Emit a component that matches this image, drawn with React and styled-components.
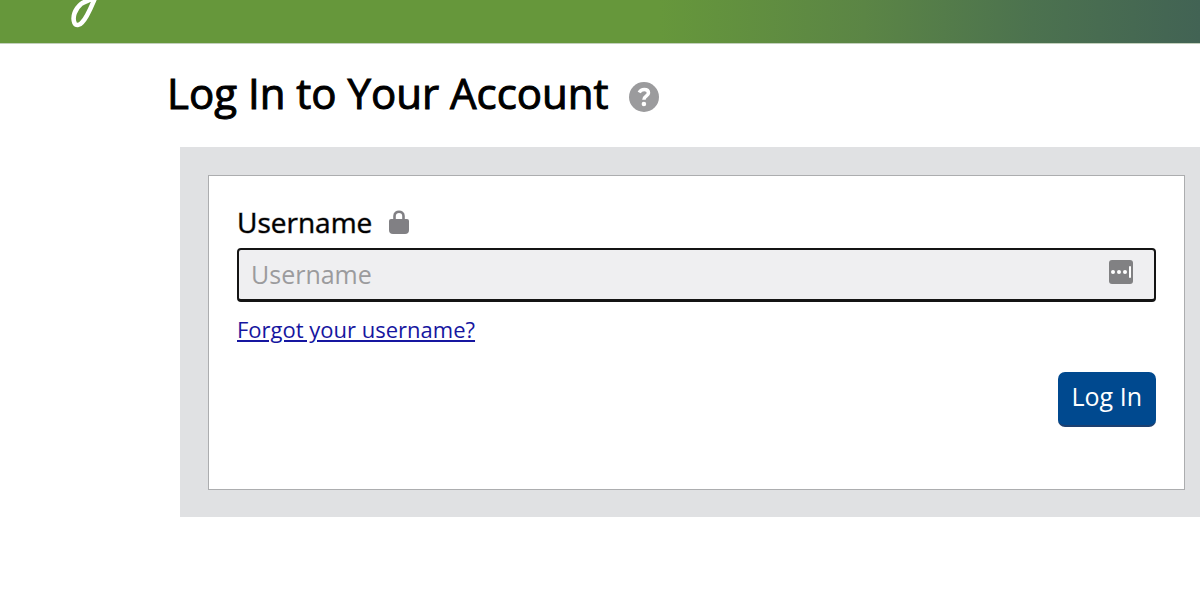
import React from "react";
import styled, { createGlobalStyle } from "styled-components";

const GlobalStyle = createGlobalStyle`
  *, *::before, *::after { box-sizing: border-box; }
  body {
    margin: 0;
    background: #fff;
    color: #000;
    font-family: "Open Sans", "Noto Sans", sans-serif;
    overflow-x: hidden;
  }
`;

const Banner = styled.header`
  height: 44px;
  padding-left: 68px;
  border-bottom: 1px solid #c3d0bd;
  background: linear-gradient(90deg, #66973b 0%, #66973b 55%, #5b8545 72%, #4c724f 86%, #426354 100%);
`;

const Logo = styled.svg`
  display: block;
  width: 36px;
  height: 30px;
`;

const Main = styled.main`
  padding: 27px 0 82px 167px;
`;

const TitleRow = styled.div`
  display: flex;
  align-items: center;
  gap: 20px;
  height: 44px;
`;

const Title = styled.h1`
  margin: 0;
  font-size: 42px;
  line-height: 44px;
  font-weight: 400;
  -webkit-text-stroke: 1px #000;
  white-space: nowrap;
`;

const HelpButton = styled.button`
  width: 30px;
  height: 30px;
  margin-top: 8px;
  padding: 0;
  border: 0;
  background: none;
  cursor: pointer;

  svg { display: block; }
`;

const Panel = styled.section`
  margin: 32px 0 0 13px;
  padding: 28px 15px 27px 28px;
  background: #e0e1e3;
`;

const Card = styled.form`
  padding: 28px;
  padding-bottom: 62px;
  border: 1px solid #acadaf;
  background: #fff;
`;

const LabelRow = styled.div`
  display: flex;
  align-items: center;
  gap: 17px;
  height: 36px;
`;

const Label = styled.label`
  font-size: 28px;
  line-height: 36px;
  -webkit-text-stroke: 1px rgba(0, 0, 0, 0.45);
`;

const Field = styled.div`
  display: flex;
  align-items: center;
  height: 54px;
  margin-top: 8px;
  padding-right: 21px;
  border: 2px solid #141414;
  border-bottom-width: 3px;
  border-radius: 4px;
  background: #efeff1;
`;

const Input = styled.input`
  flex: 1;
  min-width: 0;
  height: 100%;
  padding: 0 12px 2px;
  border: 0;
  outline: 0;
  background: transparent;
  color: #000;
  font-family: inherit;
  font-size: 25px;

  &::placeholder { color: #9b9b9d; opacity: 1; }
`;

const FillButton = styled.button`
  width: 24px;
  height: 24px;
  margin-bottom: 6px;
  padding: 0;
  border: 0;
  background: none;
  cursor: pointer;

  svg { display: block; }
`;

const ForgotLink = styled.a`
  display: inline-block;
  margin-top: 11px;
  color: #1616a0;
  font-size: 22px;
  line-height: 32px;
`;

const Actions = styled.div`
  display: flex;
  justify-content: flex-end;
  margin-top: 27px;
`;

const SubmitButton = styled.button`
  height: 55px;
  padding: 0 14px 5px;
  border: 0;
  border-bottom: 2px solid #1d4070;
  border-radius: 7px;
  background: #00498f;
  color: #fff;
  font-family: inherit;
  font-size: 25px;
  cursor: pointer;
`;

export default function App() {
  return (
    <>
      <GlobalStyle />
      <Banner>
        <Logo viewBox="0 0 36 30" aria-hidden="true">
          <path
            d="M27.5 -3C24 5 19 18 14 22.500C11.500 25.500 8 26 6.500 23C4 17 7 9 13 4C17 1 23 0 27 -3"
            fill="none"
            stroke="#fff"
            strokeWidth="4.600"
            strokeLinecap="round"
          />
        </Logo>
      </Banner>
      <Main>
        <TitleRow>
          <Title>Log In to Your Account</Title>
          <HelpButton type="button" aria-label="Help">
            <svg width="30" height="30" viewBox="0 0 30 30">
              <circle cx="15" cy="15" r="15" fill="#9b9b9d" />
              <path
                d="M10.200 10.500C11.400 8.300 13 7.500 15.200 7.500C18 7.500 19.500 9 19.500 11C19.500 13.900 14.900 13.900 14.900 17.800"
                fill="none"
                stroke="#fff"
                strokeWidth="3.500"
              />
              <circle cx="14.900" cy="22" r="2.300" fill="#fff" />
            </svg>
          </HelpButton>
        </TitleRow>
        <Panel>
          <Card onSubmit={(event) => event.preventDefault()}>
            <LabelRow>
              <Label htmlFor="username">Username</Label>
              <svg width="20" height="24" viewBox="0 0 20 24" aria-hidden="true">
                <path
                  d="M5.500 10V6C5.500 0.400 14.500 0.400 14.500 6V10"
                  fill="none"
                  stroke="#818084"
                  strokeWidth="2.600"
                />
                <path
                  d="M2 9H18Q20 9 20 11V20Q20 24 16 24H4Q0 24 0 20V11Q0 9 2 9Z"
                  fill="#818084"
                />
              </svg>
            </LabelRow>
            <Field>
              <Input id="username" type="text" placeholder="Username" autoComplete="username" />
              <FillButton type="button" aria-label="Fill saved login">
                <svg width="24" height="24" viewBox="0 0 24 24">
                  <rect width="24" height="24" rx="3" fill="#818183" />
                  <circle cx="4" cy="12" r="2" fill="#fff" />
                  <circle cx="10" cy="12" r="2" fill="#fff" />
                  <circle cx="16" cy="12" r="2" fill="#fff" />
                  <rect x="20" y="6" width="2" height="12" rx="1" fill="#fff" />
                </svg>
              </FillButton>
            </Field>
            <ForgotLink href="#forgot-username">Forgot your username?</ForgotLink>
            <Actions>
              <SubmitButton type="submit">Log In</SubmitButton>
            </Actions>
          </Card>
        </Panel>
      </Main>
    </>
  );
}
